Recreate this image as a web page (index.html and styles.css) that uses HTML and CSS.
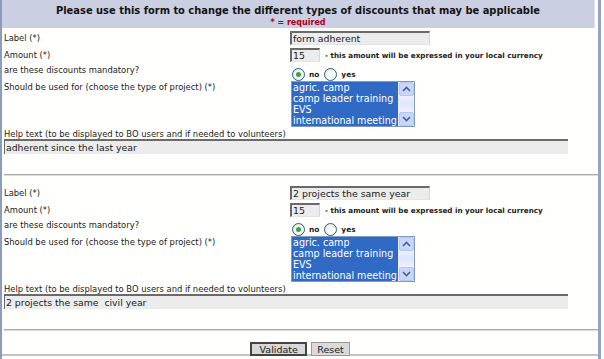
FILE: index.html
```html
<!DOCTYPE html>
<html lang="en">
<head>
   <title>Discounts</title>
   <link rel="stylesheet" href="styles.css">
</head>
<body>
   <div class="page">
      <div class="head">
         <h1>Please use this form to change the different types of discounts that may be applicable</h1>
         <p class="req">* = required</p>
      </div>

      <div class="block first">
         <div class="row">
            <span class="lbl">Label (*)</span>
            <input type="text" class="txt name" value="form adherent">
         </div>
         <div class="row">
            <span class="lbl">Amount (*)</span>
            <div class="field">
               <input type="text" class="txt amount" value="15">
               <span class="note">- this amount will be expressed in your local currency</span>
            </div>
         </div>
         <div class="row radios">
            <span class="lbl small">are these discounts mandatory?</span>
            <div class="field">
               <label class="opt"><input type="radio" name="m1" checked> no</label>
               <label class="opt"><input type="radio" name="m1"> yes</label>
            </div>
         </div>
         <div class="row list-row">
            <span class="lbl">Should be used for (choose the type of project) (*)</span>
            <div class="listbox">
               <div class="items">
                  <div>agric. camp</div>
                  <div>camp leader training</div>
                  <div>EVS</div>
                  <div>international meeting</div>
               </div>
               <div class="scroll">
                  <span class="arrow up"><svg width="9" height="6" viewBox="0 0 9 6"><path d="M1 5 L4.5 1.5 L8 5" fill="none" stroke="#4d6185" stroke-width="1.6"/></svg></span>
                  <span class="track"></span>
                  <span class="arrow down"><svg width="9" height="6" viewBox="0 0 9 6"><path d="M1 1 L4.5 4.5 L8 1" fill="none" stroke="#4d6185" stroke-width="1.6"/></svg></span>
               </div>
            </div>
         </div>
         <div class="help-lbl">Help text (to be displayed to BO users and if needed to volunteers)</div>
         <input type="text" class="txt help" value="adherent since the last year">
      </div>

      <hr class="sep">

      <div class="block">
         <div class="row">
            <span class="lbl">Label (*)</span>
            <input type="text" class="txt name" value="2 projects the same year">
         </div>
         <div class="row">
            <span class="lbl">Amount (*)</span>
            <div class="field">
               <input type="text" class="txt amount" value="15">
               <span class="note">- this amount will be expressed in your local currency</span>
            </div>
         </div>
         <div class="row radios">
            <span class="lbl small">are these discounts mandatory?</span>
            <div class="field">
               <label class="opt"><input type="radio" name="m2" checked> no</label>
               <label class="opt"><input type="radio" name="m2"> yes</label>
            </div>
         </div>
         <div class="row list-row">
            <span class="lbl">Should be used for (choose the type of project) (*)</span>
            <div class="listbox">
               <div class="items">
                  <div>agric. camp</div>
                  <div>camp leader training</div>
                  <div>EVS</div>
                  <div>international meeting</div>
               </div>
               <div class="scroll">
                  <span class="arrow up"><svg width="9" height="6" viewBox="0 0 9 6"><path d="M1 5 L4.5 1.5 L8 5" fill="none" stroke="#4d6185" stroke-width="1.6"/></svg></span>
                  <span class="track"></span>
                  <span class="arrow down"><svg width="9" height="6" viewBox="0 0 9 6"><path d="M1 1 L4.5 4.5 L8 1" fill="none" stroke="#4d6185" stroke-width="1.6"/></svg></span>
               </div>
            </div>
         </div>
         <div class="help-lbl">Help text (to be displayed to BO users and if needed to volunteers)</div>
         <input type="text" class="txt help" value="2 projects the same  civil year">
      </div>

      <hr class="sep">

      <div class="actions">
         <button class="btn default">Validate</button>
         <button class="btn">Reset</button>
      </div>
   </div>
</body>
</html>
```

FILE: styles.css
```css
* {
    margin: 0;
    padding: 0;
    box-sizing: border-box;
    font-family: "DejaVu Sans", Verdana, sans-serif;
}
body {
    background: #fff;
    width: 604px;
    height: 359px;
    overflow: hidden;
}
.page {
    width: 601px;
    height: 359px;
    background: #fffffd;
    border-left: 2px solid #8d9bbd;
    border-right: 3px solid #97a3c2;
}
.head {
    height: 28px;
    background: #cbcfe2;
    border-right: 1px solid #dfe2ee;
    margin-right: 3px;
    text-align: center;
    padding-top: 4px;
}
.head h1 {
    font-family: "DejaVu Sans Condensed", "DejaVu Sans", sans-serif;
    font-size: 11px;
    font-weight: bold;
    color: #141414;
    line-height: 14px;
}
.req {
    font-size: 8px;
    font-weight: bold;
    color: #a8001c;
    line-height: 10px;
}
.block {
    padding: 10px 0 0 2px;
    height: 153px;
}
.block.first {
    padding-top: 3px;
    height: 146px;
}
.row {
    display: grid;
    grid-template-columns: 286px 1fr;
    height: 17px;
}
.lbl {
    font-size: 8.4px;
    color: #1a1a1a;
    line-height: 14px;
}
.lbl.small {
    line-height: 11px;
}
.field {
    display: flex;
    align-items: center;
    height: 14px;
}
.txt {
    height: 14px;
    background: #ececec;
    border-top: 2px solid #6a6a6a;
    border-left: 2px solid #6a6a6a;
    border-right: 1px solid #d6d6d6;
    border-bottom: 1px solid #e4e4e4;
    font-size: 9.4px;
    color: #1a1a1a;
    padding: 0 1px;
    outline: none;
}
.txt.name {
    width: 140px;
}
.txt.amount {
    width: 30px;
}
.note {
    font-size: 7.2px;
    font-weight: bold;
    color: #222;
    margin-left: 5px;
}
.row.radios {
    height: 16px;
}
.radios .field {
    height: 16px;
    padding: 3px 0 0 2px;
}
.opt {
    display: flex;
    align-items: center;
    font-size: 7.4px;
    font-weight: bold;
    color: #222;
    margin-right: 5px;
}
.opt input {
    appearance: none;
    width: 13px;
    height: 13px;
    border-radius: 50%;
    border: 1px solid #2c5a8a;
    background: radial-gradient(circle at 60% 60%, #fff 30%, #d8d8d0 100%);
    margin-right: 4px;
    position: relative;
}
.opt input:checked::after {
    content: "";
    position: absolute;
    left: 3px;
    top: 3px;
    width: 5px;
    height: 5px;
    border-radius: 50%;
    background: #2fa83a;
}
.row.list-row {
    height: 47px;
}
.list-row .lbl {
    line-height: 11px;
    padding-top: 1px;
}
.listbox {
    display: flex;
    width: 124px;
    height: 46px;
    margin-left: 1px;
    border: 1px solid #7f9db9;
    background: #316ac5;
}
.items {
    flex: 1;
    overflow: hidden;
    color: #fff;
    font-size: 9.6px;
    line-height: 11px;
    padding-left: 1px;
    white-space: nowrap;
}
.scroll {
    width: 16px;
    display: flex;
    flex-direction: column;
    background: #f1f3fb;
    border-left: 1px solid #e8ecf8;
}
.arrow {
    height: 14px;
    display: flex;
    align-items: center;
    justify-content: center;
    background: #c6d6fc;
    border: 1px solid #b6c8f2;
    border-radius: 2px;
}
.track {
    flex: 1;
    background: linear-gradient(#eef1fa, #dde6fb 45%, #eef1fa);
}
.help-lbl {
    font-size: 8.4px;
    color: #1a1a1a;
    line-height: 10px;
    margin-top: 1px;
}
.txt.help {
    display: block;
    width: 564px;
    height: 15px;
    border-left: 1px solid #6a6a6a;
    border-right: none;
    border-bottom: none;
    font-size: 9.3px;
}
.sep {
    border: none;
    border-top: 1px solid #aaa;
    border-bottom: 1px solid #ddd;
    margin: 0 0 0 2px;
    height: 2px;
}
.actions {
    display: flex;
    justify-content: center;
    gap: 4px;
    padding: 11px 0 0 0;
    height: 25px;
    border-bottom: 2px solid #c4c4c4;
}
.btn {
    height: 14px;
    font-size: 9.5px;
    color: #1a1a1a;
    background: #dadada;
    border: 1px solid #9a9a9a;
    padding: 0 5px;
}
.btn.default {
    width: 57px;
    border: 2px solid #444;
    background: #d8d8d8;
}
```
